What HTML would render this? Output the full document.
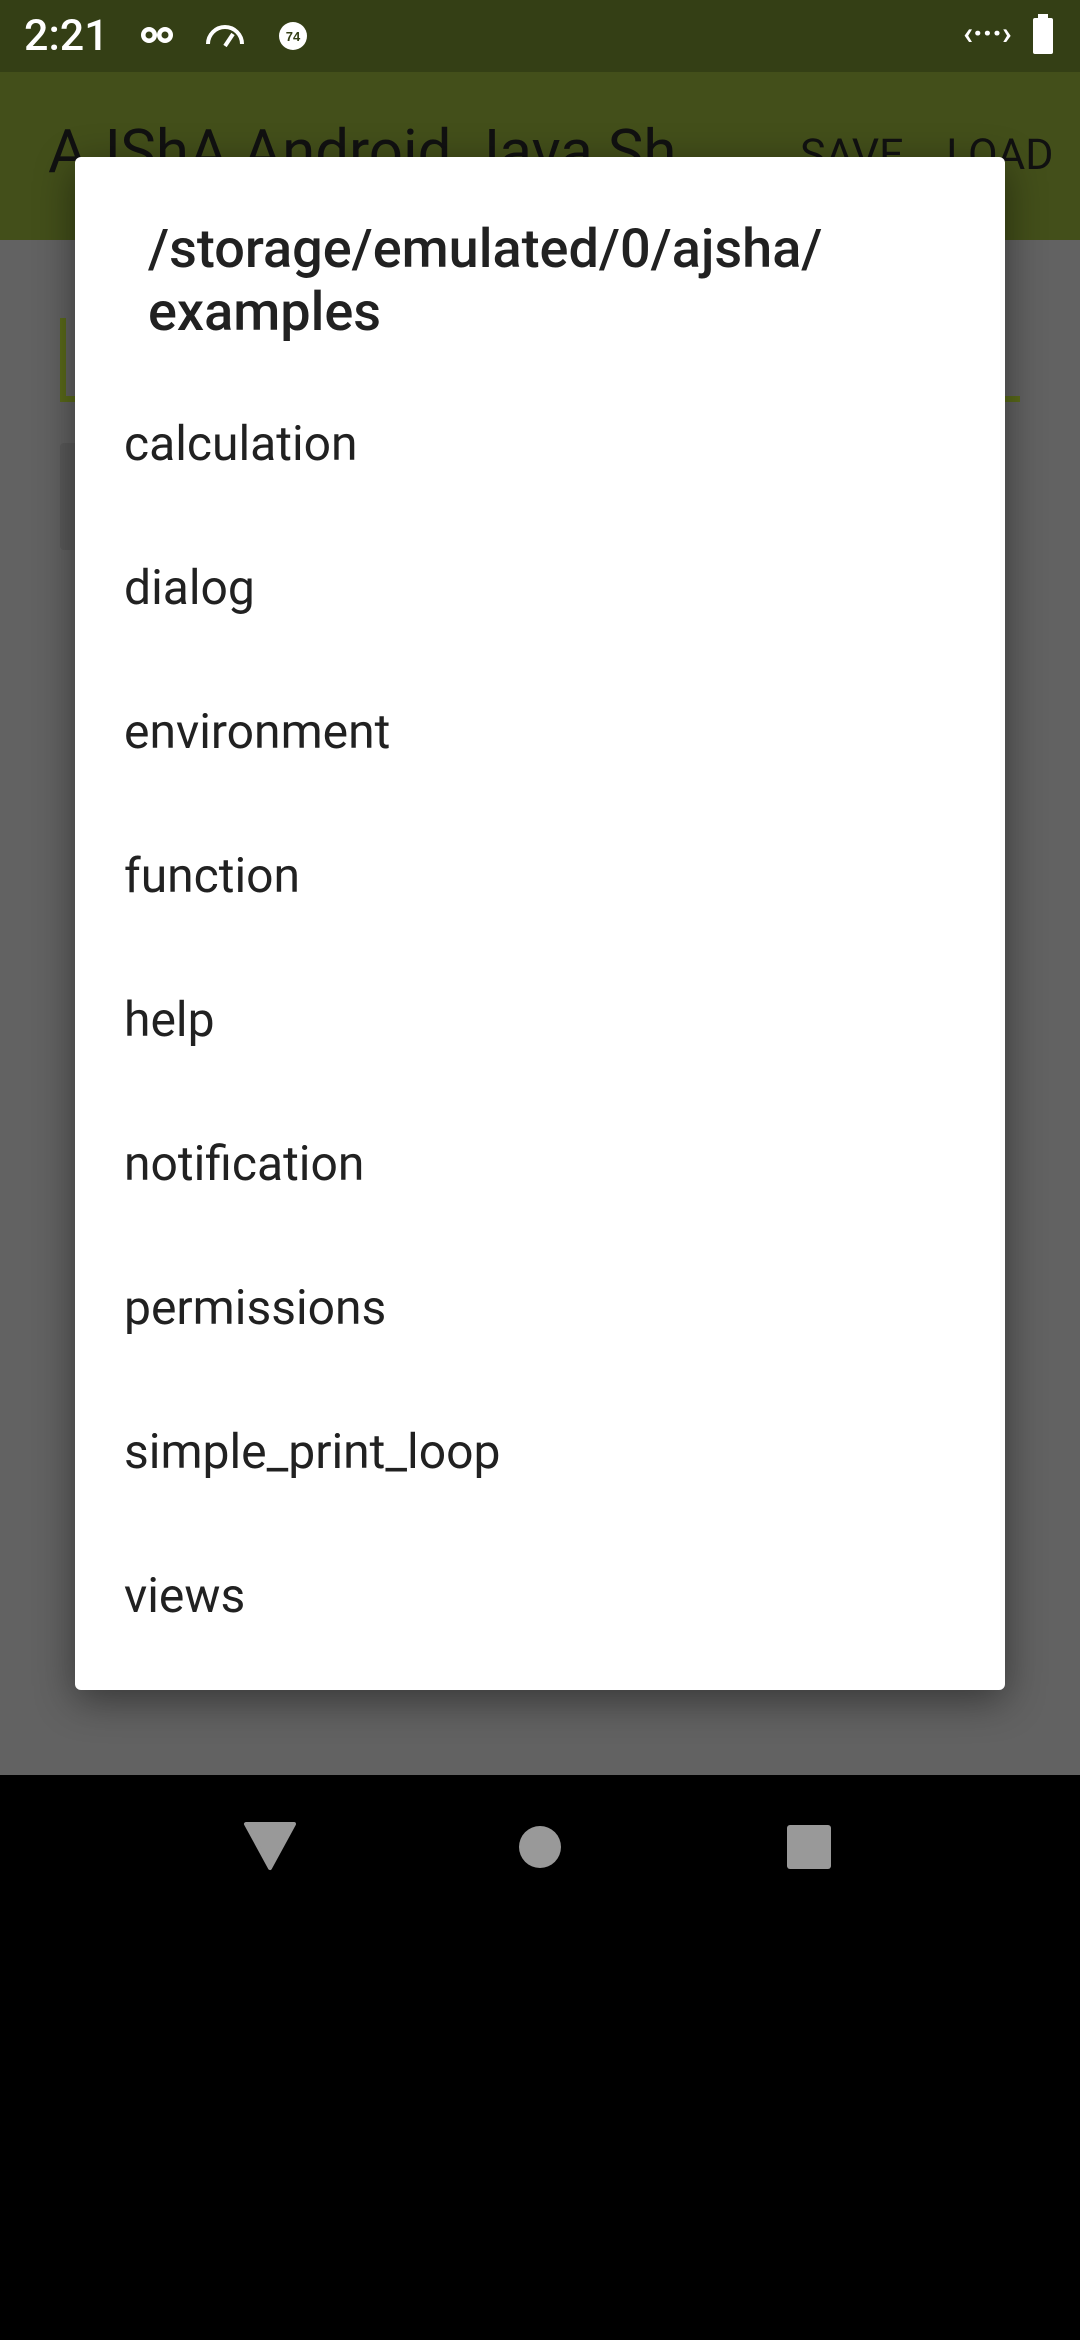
<!DOCTYPE html>
<html><head><meta charset="utf-8"><style>
*{margin:0;padding:0;box-sizing:border-box}
body{width:1080px;height:2340px;background:#000;position:relative;overflow:hidden;font-family:"Roboto","Liberation Sans",sans-serif}
.abs{position:absolute}
#status{left:0;top:0;width:1080px;height:72px;background:#343f15}
#app{left:0;top:72px;width:1080px;height:168px;background:#434f1a}
#content{left:0;top:240px;width:1080px;height:1535px;background:#626262}
.dlg{left:75px;top:157px;width:930px;height:1533px;background:#fff;border-radius:6px;box-shadow:0 10px 40px rgba(0,0,0,0.45)}
.item{position:absolute;left:124px;font-size:48px;color:#212121;line-height:56px}
</style></head><body>
<div id="status" class="abs"></div>
<div class="abs" style="left:24px;top:10px;font-size:43px;font-weight:500;color:#fff;line-height:52px">2:21</div>
<svg class="abs" style="left:140px;top:20px" width="185" height="36" viewBox="0 0 185 36">
<g fill="#fff"><circle cx="9" cy="15" r="8"/><circle cx="25" cy="15" r="8"/></g>
<g fill="#343f15"><circle cx="9" cy="15" r="3.5"/><circle cx="25" cy="15" r="3.5"/></g>
<path d="M68 24 A17 17 0 0 1 102 24" stroke="#fff" stroke-width="4" fill="none"/>
<path d="M85 26 L93 14" stroke="#fff" stroke-width="4"/>
<circle cx="153" cy="16" r="14" fill="#fff"/><text x="153" y="21" font-size="13" font-weight="bold" text-anchor="middle" fill="#343f15" font-family="Liberation Sans">74</text>
</svg>
<div class="abs" style="left:963px;top:14px;font-size:32px;font-weight:bold;color:#fff">‹···›</div>
<div class="abs" style="left:1033px;top:18px;width:20px;height:36px;background:#fff;border-radius:2px"></div>
<div class="abs" style="left:1038px;top:14px;width:10px;height:5px;background:#fff"></div>
<div id="app" class="abs"></div>
<div class="abs" style="left:48px;top:120px;font-size:60px;color:#111;line-height:64px;white-space:nowrap">AJShA Android Java Sh...</div>
<div class="abs" style="left:800px;top:130px;font-size:43px;color:#111;white-space:nowrap">SAVE&nbsp;&nbsp;&nbsp;&nbsp;LOAD</div>
<div id="content" class="abs"></div>
<div class="abs" style="left:60px;top:318px;width:6px;height:80px;background:#5a6a1a"></div>
<div class="abs" style="left:60px;top:396px;width:960px;height:6px;background:#5a6a1a"></div>
<div class="abs" style="left:60px;top:443px;width:20px;height:107px;background:#5a5a5a;border-radius:4px 0 0 4px"></div>
<div class="abs dlg"></div>
<div class="abs" style="left:148px;top:218px;font-size:54px;font-weight:500;color:#212121;line-height:63px">/storage/emulated/0/ajsha/<br>examples</div>
<div class="item" style="top:416px">calculation</div>
<div class="item" style="top:560px">dialog</div>
<div class="item" style="top:704px">environment</div>
<div class="item" style="top:848px">function</div>
<div class="item" style="top:992px">help</div>
<div class="item" style="top:1136px">notification</div>
<div class="item" style="top:1280px">permissions</div>
<div class="item" style="top:1424px">simple_print_loop</div>
<div class="item" style="top:1568px">views</div>
<svg class="abs" style="left:0;top:1775px" width="1080" height="565">
<path d="M246 49 L294 49 L270 93 Z" fill="#999" stroke="#999" stroke-width="4" stroke-linejoin="round"/>
<circle cx="540" cy="72" r="21" fill="#999"/>
<rect x="787" y="50" width="44" height="44" rx="3" fill="#999"/>
</svg>
</body></html>
